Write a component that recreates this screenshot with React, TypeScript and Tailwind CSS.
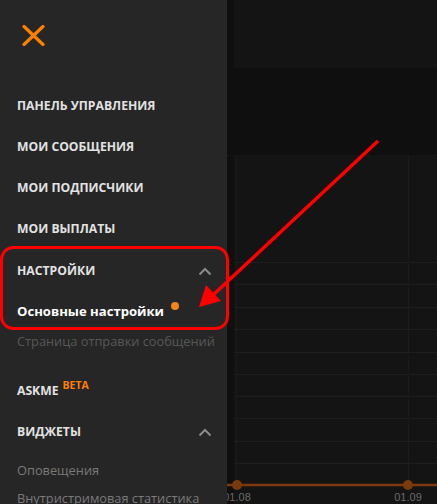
import React from 'react';

const font = { fontFamily: '"Open Sans", "Noto Sans", sans-serif' };

function ChevronUp() {
  return (
    <svg width="14" height="9" viewBox="0 0 14 9" fill="none">
      <path d="M1.5 7.5L7 2l5.5 5.5" stroke="#8a8a8a" strokeWidth="2" />
    </svg>
  );
}

function NavItem({ label, chevron, children }: { label: string; chevron?: boolean; children?: React.ReactNode }) {
  return (
    <div className="h-[41px] shrink-0 flex items-center justify-between pl-[17px] pr-[15px]">
      <span className="text-[12.2px] font-bold text-[#e2e2e2] whitespace-nowrap">
        {label}
        {children}
      </span>
      {chevron && <ChevronUp />}
    </div>
  );
}

function SubItem({ label, active, dim, tall }: { label: string; active?: boolean; dim?: string; tall?: boolean }) {
  return (
    <div className={`${tall ? 'h-[30px]' : 'h-[28px]'} shrink-0 flex items-center pl-[17px]`}>
      {active ? (
        <span className="relative text-[13.1px] font-bold text-white whitespace-nowrap">
          {label}
          <span className="absolute -right-[15px] top-[0px] w-[8px] h-[8px] rounded-full bg-[#f0861a]" />
        </span>
      ) : (
        <span className={`text-[12.8px] whitespace-nowrap ${dim}`}>{label}</span>
      )}
    </div>
  );
}

function Chart() {
  const rows = [262, 284, 307, 329, 352, 374, 396, 418, 441, 463];
  return (
    <svg width="203" height="348" viewBox="234 156 203 348" className="block overflow-visible">
      {rows.map((y) => (
        <line key={y} x1="234" x2="437" y1={y + 0.5} y2={y + 0.5} stroke="#1d1d1d" />
      ))}
      <line x1="236.5" x2="236.5" y1="156" y2="485" stroke="#1f1f1f" strokeDasharray="1 1" />
      <line x1="408.5" x2="408.5" y1="156" y2="485" stroke="#1f1f1f" strokeDasharray="1 1" />
      <line x1="226" x2="437" y1="485" y2="485" stroke="#7a3a0c" strokeWidth="2.5" />
      <circle cx="237" cy="485" r="5" fill="#7a3a0c" />
      <circle cx="408" cy="485" r="5" fill="#7a3a0c" />
      <text x="237" y="501" fill="#6a6a6a" fontSize="11" textAnchor="middle" fontFamily="Liberation Sans, sans-serif">01.08</text>
      <text x="408" y="501" fill="#6a6a6a" fontSize="11" textAnchor="middle" fontFamily="Liberation Sans, sans-serif">01.09</text>
    </svg>
  );
}

export default function App() {
  return (
    <div className="relative w-[437px] h-[504px] overflow-hidden bg-[#0f0f0f] flex" style={font}>
      <aside className="relative z-10 w-[227px] shrink-0 h-full bg-[#262626] flex flex-col">
        <div className="h-[86px] shrink-0 pl-[22px] pt-[25px]">
          <svg width="23" height="21" viewBox="0 0 23 21">
            <path d="M2 1.5L21 19.5M21 1.5L2 19.5" stroke="#ff8000" strokeWidth="3.2" strokeLinecap="round" />
          </svg>
        </div>
        <NavItem label="ПАНЕЛЬ УПРАВЛЕНИЯ" />
        <NavItem label="МОИ СООБЩЕНИЯ" />
        <NavItem label="МОИ ПОДПИСЧИКИ" />
        <NavItem label="МОИ ВЫПЛАТЫ" />
        <div className="h-[1px] shrink-0" />
        <NavItem label="НАСТРОЙКИ" chevron />
        <div className="h-[5px] shrink-0" />
        <SubItem label="Основные настройки" active tall />
        <SubItem label="Страница отправки сообщений" dim="text-[#585858]" tall />
        <div className="h-[14px] shrink-0" />
        <NavItem label="ASKME">
          <sup className="ml-[4px] text-[10.5px] text-[#ff8000] font-bold -top-[6px]">BETA</sup>
        </NavItem>
        <NavItem label="ВИДЖЕТЫ" chevron />
        <div className="h-[4px] shrink-0" />
        <SubItem label="Оповещения" dim="text-[#7a7a7a]" />
        <SubItem label="Внутристримовая статистика" dim="text-[#7a7a7a]" />
      </aside>
      <main className="flex-1 flex flex-col pl-[7px]">
        <div className="h-[68px] shrink-0 bg-[#141414]" />
        <div className="h-[88px] shrink-0 -ml-[7px] border-b border-dotted border-[#1a1a1a]" />
        <div className="flex-1 bg-[#141414]">
          <Chart />
        </div>
      </main>
      <svg className="absolute inset-0 z-20 pointer-events-none" width="437" height="504">
        <rect x="1.5" y="247.5" width="226" height="81" rx="12" fill="none" stroke="#ff0000" strokeWidth="3" />
        <line x1="378" y1="141" x2="212" y2="296" stroke="#ff0000" strokeWidth="3.5" />
        <polygon points="199,307 206,285 221,301" fill="#ff0000" />
      </svg>
    </div>
  );
}
